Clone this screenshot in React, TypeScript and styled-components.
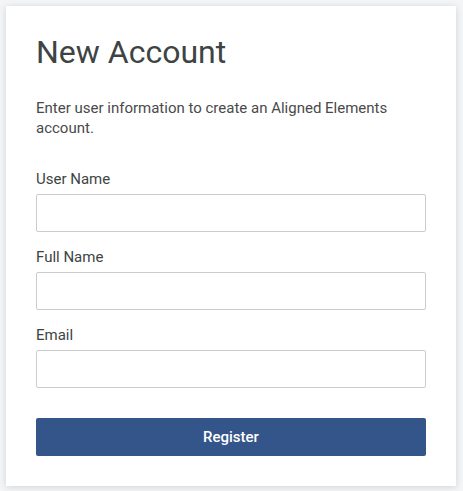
import React, { FC } from 'react'
import styled, { createGlobalStyle } from 'styled-components'

const GlobalStyle = createGlobalStyle`
  html, body {
    margin: 0;
    padding: 0;
    background: #f4f5f7;
    font-family: Roboto, "Liberation Sans", Arial, sans-serif;
  }
  * {
    box-sizing: border-box;
  }
`

const fields = ['User Name', 'Full Name', 'Email']

const App: FC = () => {
  return (
    <Page>
      <GlobalStyle />
      <Card>
        <Title>New Account</Title>
        <Intro>Enter user information to create an Aligned Elements account.</Intro>
        <Form onSubmit={(e) => e.preventDefault()}>
          {fields.map((f) => (
            <Field key={f}>
              <Label>{f}</Label>
              <Input type={f === 'Email' ? 'email' : 'text'} />
            </Field>
          ))}
          <Button type="submit">Register</Button>
        </Form>
      </Card>
    </Page>
  )
}

const Page = styled.div`
  padding: 6px 7px 5px 6px;
  width: 463px;
`

const Card = styled.div`
  background: #fff;
  width: 450px;
  padding: 27px 30px 30px 30px;
  box-shadow: 0 1px 7px rgba(0, 0, 0, 0.14);
`

const Title = styled.h1`
  margin: 0;
  font-size: 32px;
  font-weight: 400;
  line-height: 38px;
  color: #3e4443;
`

const Intro = styled.p`
  margin: 27px 0 0;
  font-size: 15px;
  line-height: 20px;
  color: #4a4a4a;
`

const Form = styled.form`
  display: flex;
  flex-direction: column;
  margin-top: 31px;
`

const Field = styled.div`
  display: flex;
  flex-direction: column;
  margin-bottom: 15px;
`

const Label = styled.label`
  font-size: 15px;
  line-height: 20px;
  color: #3e4443;
  margin-bottom: 5px;
`

const Input = styled.input`
  height: 38px;
  border: 1px solid #cccccc;
  border-radius: 2px;
  padding: 0 10px;
  font: inherit;
  font-size: 15px;
  outline: none;
`

const Button = styled.button`
  height: 38px;
  margin-top: 15px;
  border: none;
  border-radius: 2px;
  background: #33558a;
  color: #fff;
  font-family: Roboto, "Liberation Sans", Arial, sans-serif;
  font-size: 15px;
  font-weight: 500;
  cursor: pointer;
`

export default App
